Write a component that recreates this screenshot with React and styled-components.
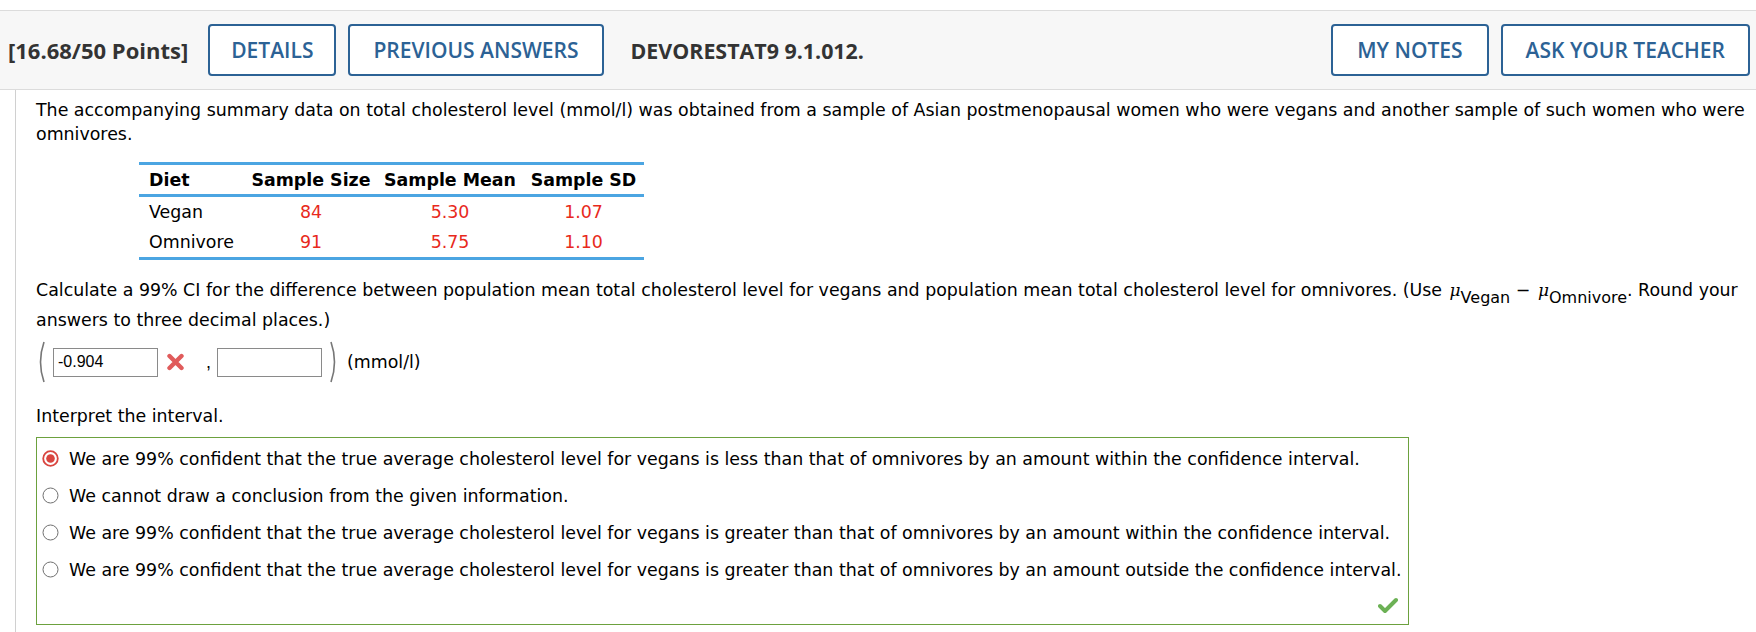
import React from "react";
import styled, { createGlobalStyle } from "styled-components";

const GlobalStyle = createGlobalStyle`
  html, body {
    margin: 0;
    padding: 0;
    background: #ffffff;
  }
  body {
    font-family: "DejaVu Sans", Verdana, sans-serif;
    color: #000;
  }
`;

const Page = styled.div`
  padding-top: 10px;
  width: 1756px;
`;

const Header = styled.div`
  display: flex;
  align-items: center;
  height: 78px;
  border-top: 1px solid #dcdcdc;
  border-bottom: 1px solid #dcdcdc;
  background: #f7f7f7;
  padding: 0 6px 0 8px;
  font-family: "Open Sans", sans-serif;
`;

const Points = styled.span`
  font-size: 22px;
  font-weight: 700;
  color: #333;
  margin-right: 20px;
`;

const HeadButton = styled.button`
  height: 52px;
  padding: 0 ${(p) => p.$pad || 23}px;
  margin-right: 12px;
  background: #fff;
  border: 2px solid #2c6295;
  border-radius: 4px;
  color: #2c6295;
  font-family: "Open Sans", sans-serif;
  font-size: 21px;
  font-weight: 600;
  cursor: pointer;
  &:last-child {
    margin-right: 0;
  }
`;

const Code = styled.span`
  font-size: 21.4px;
  font-weight: 700;
  color: #333;
  margin-left: 15px;
`;

const Spacer = styled.div`
  flex: 1;
`;

const Body = styled.div`
  margin-left: 15px;
  border-left: 1px solid #d0d0d0;
  padding: 8px 8px 10px 20px;
  font-size: 17.4px;
  line-height: 24px;
`;

const Para = styled.p`
  margin: 0;
  line-height: ${(p) => p.$lh || 24}px;
`;

const DataTable = styled.table`
  border-collapse: collapse;
  margin: 16px 0 0 103px;
  border-top: 3px solid #4ba5e2;
  border-bottom: 3px solid #4ba5e2;
  font-size: 17.4px;
`;

const Th = styled.th`
  font-weight: 700;
  height: 29px;
  padding: 0;
  width: ${(p) => p.$w}px;
  text-align: ${(p) => (p.$left ? "left" : "center")};
  padding-left: ${(p) => (p.$left ? 10 : 0)}px;
  border-bottom: 3px solid #4ba5e2;
`;

const Td = styled.td`
  height: 30px;
  padding: 0;
  text-align: ${(p) => (p.$left ? "left" : "center")};
  padding-left: ${(p) => (p.$left ? 10 : 0)}px;
  color: ${(p) => (p.$red ? "#e8291c" : "#000")};
`;

const Mu = styled.span`
  font-style: italic;
  font-family: "DejaVu Serif", serif;
  font-size: 17px;
  margin-left: 2px;
`;

const Sub = styled.sub`
  font-size: 16px;
  vertical-align: -7px;
  line-height: 0;
`;

const AnswerRow = styled.div`
  display: flex;
  align-items: center;
  height: 44px;
  margin-top: 5px;
`;

const Paren = styled.svg`
  width: 9px;
  height: 42px;
  flex: none;
`;

const Field = styled.input`
  width: 105px;
  height: 29px;
  box-sizing: border-box;
  border: 1px solid #8a8a8a;
  padding: 0 4px;
  font-family: "Liberation Sans", Arial, sans-serif;
  font-size: 16px;
  color: #000;
  margin: ${(p) => p.$m};
  outline: none;
`;

const Comma = styled.span`
  font-family: "Liberation Sans", Arial, sans-serif;
  font-size: 18px;
  margin: 0 6px 0 21px;
`;

const Unit = styled.span`
  margin-left: 8px;
`;

const Choices = styled.div`
  margin-top: 9px;
  width: 1366px;
  border: 1px solid #6ca13e;
  padding: 2px 0 0 5px;
  height: 184px;
  display: flex;
  flex-direction: column;
`;

const Choice = styled.label`
  display: flex;
  align-items: center;
  height: 37px;
  gap: 10px;
`;

const Radio = styled.svg`
  width: 17px;
  height: 17px;
  flex: none;
`;

const Foot = styled.div`
  flex: 1;
  display: flex;
  justify-content: flex-end;
  align-items: flex-end;
  padding: 0 10px 10px 0;
`;

const options = [
  "We are 99% confident that the true average cholesterol level for vegans is less than that of omnivores by an amount within the confidence interval.",
  "We cannot draw a conclusion from the given information.",
  "We are 99% confident that the true average cholesterol level for vegans is greater than that of omnivores by an amount within the confidence interval.",
  "We are 99% confident that the true average cholesterol level for vegans is greater than that of omnivores by an amount outside the confidence interval.",
];

const rows = [
  ["Vegan", "84", "5.30", "1.07"],
  ["Omnivore", "91", "5.75", "1.10"],
];

function RadioIcon({ on }) {
  return (
    <Radio viewBox="0 0 17 17">
      {on ? (
        <>
          <circle cx="8.5" cy="8.5" r="7.3" fill="#fff" stroke="#d9453f" strokeWidth="1.8" />
          <circle cx="8.5" cy="8.5" r="4.3" fill="#d9453f" />
        </>
      ) : (
        <circle cx="8.5" cy="8.5" r="7.5" fill="#fff" stroke="#707070" strokeWidth="1" />
      )}
    </Radio>
  );
}

function Cross() {
  return (
    <svg width="19" height="18" viewBox="0 0 19 18" style={{ marginLeft: 8 }}>
      <path d="M3.5 3 L15.5 15 M15.5 3 L3.5 15" stroke="#e05b5b" strokeWidth="4.4" strokeLinecap="round" />
    </svg>
  );
}

function Check() {
  return (
    <svg width="20" height="17" viewBox="0 0 20 17">
      <path d="M2 9 L7 14 L18 3" fill="none" stroke="#6cb155" strokeWidth="4" strokeLinecap="round" strokeLinejoin="round" />
    </svg>
  );
}

export default function App() {
  return (
    <Page>
      <GlobalStyle />
      <Header>
        <Points>[16.68/50 Points]</Points>
        <HeadButton $pad={21}>DETAILS</HeadButton>
        <HeadButton>PREVIOUS ANSWERS</HeadButton>
        <Code>DEVORESTAT9 9.1.012.</Code>
        <Spacer />
        <HeadButton $pad={24}>MY NOTES</HeadButton>
        <HeadButton>ASK YOUR TEACHER</HeadButton>
      </Header>

      <Body>
        <Para>
          The accompanying summary data on total cholesterol level (mmol/l) was obtained from a sample
          of Asian postmenopausal women who were vegans and another sample of such women who were
          omnivores.
        </Para>

        <DataTable>
          <thead>
            <tr>
              <Th $left $w={96}>Diet</Th>
              <Th $w={132}>Sample Size</Th>
              <Th $w={146}>Sample Mean</Th>
              <Th $w={121}>Sample SD</Th>
            </tr>
          </thead>
          <tbody>
            {rows.map((r) => (
              <tr key={r[0]}>
                <Td $left>{r[0]}</Td>
                <Td $red>{r[1]}</Td>
                <Td $red>{r[2]}</Td>
                <Td $red>{r[3]}</Td>
              </tr>
            ))}
          </tbody>
        </DataTable>

        <Para $lh={30} style={{ marginTop: 15 }}>
          Calculate a 99% CI for the difference between population mean total cholesterol level for
          vegans and population mean total cholesterol level for omnivores. (Use{" "}
          <Mu>μ</Mu>
          <Sub>Vegan</Sub> − <Mu>μ</Mu>
          <Sub>Omnivore</Sub>. Round your answers to three decimal places.)
        </Para>

        <AnswerRow>
          <Paren viewBox="0 0 9 42">
            <path d="M8 1 Q1 21 8 41" fill="none" stroke="#777" strokeWidth="1.6" />
          </Paren>
          <Field $m="0 0 0 8px" defaultValue="-0.904" />
          <Cross />
          <Comma>,</Comma>
          <Field $m="0 8px 0 0" defaultValue="" />
          <Paren viewBox="0 0 9 42">
            <path d="M1 1 Q8 21 1 41" fill="none" stroke="#777" strokeWidth="1.6" />
          </Paren>
          <Unit>(mmol/l)</Unit>
        </AnswerRow>

        <Para style={{ marginTop: 20 }}>Interpret the interval.</Para>

        <Choices>
          {options.map((o, i) => (
            <Choice key={i}>
              <RadioIcon on={i === 0} />
              <span>{o}</span>
            </Choice>
          ))}
          <Foot>
            <Check />
          </Foot>
        </Choices>
      </Body>
    </Page>
  );
}
